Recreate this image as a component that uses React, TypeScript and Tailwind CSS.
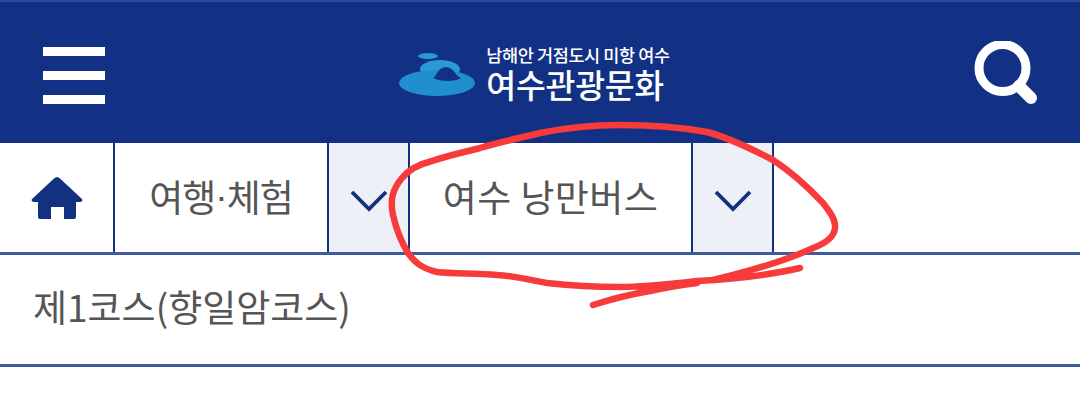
export default function App() {
  const font = { fontFamily: '"Noto Sans CJK KR", sans-serif' };
  const Chevron = () => (
    <svg width="38" height="24" viewBox="0 0 38 24" fill="none">
      <path d="M2 3 L19 20 L36 3" stroke="#12327f" strokeWidth="3.800" />
    </svg>
  );
  return (
    <div className="relative w-[1080px] h-[409px] bg-white overflow-hidden" style={font}>
      <header className="h-[143px] bg-[#123184] border-t-2 border-[#2d4a94] flex items-center justify-between pl-[43px] pr-[42px]">
        <div className="w-[62px] flex flex-col gap-[15px] mt-[6px]">
          <div className="h-[9px] bg-white" />
          <div className="h-[9px] bg-white" />
          <div className="h-[9px] bg-white" />
        </div>
        <div className="flex items-center gap-[10px] ml-[-10px] mt-[2px]">
          <svg width="77" height="46" viewBox="0 0 77 46">
            <ellipse cx="29" cy="5" rx="10" ry="3" fill="#2a9ad6" />
            <ellipse cx="41" cy="18" rx="20" ry="9" fill="#2a9ad6" />
            <ellipse cx="38" cy="32" rx="38" ry="13" fill="#1f8fd0" />
            <path d="M34 27 C38 25 39 16 47 16 C55 16 56 25 62 27 C56 31 42 31 34 27 Z" fill="#123184" />
          </svg>
          <div className="flex flex-col text-white leading-none">
            <span className="text-[17.5px] leading-[20px] font-medium whitespace-nowrap tracking-[-0.4px]">남해안 거점도시 미항 여수</span>
            <span className="text-[32.5px] leading-[38px] font-medium whitespace-nowrap tracking-[-0.3px]">여수관광문화</span>
          </div>
        </div>
        <svg width="64" height="64" viewBox="0 0 64 64" fill="none">
          <circle cx="28.500" cy="27" r="23.500" stroke="white" strokeWidth="9" />
          <path d="M45 45 L57 57" stroke="white" strokeWidth="12" strokeLinecap="round" />
        </svg>
      </header>
      <nav className="h-[112px] flex border-b-[3px] border-[#3f5a9e] text-[#555555] text-[37px]">
        <div className="w-[115px] border-r-2 border-[#12327f] flex items-center justify-center pt-[2px]">
          <svg width="52" height="43" viewBox="0 0 52 43" fill="#12327f">
            <path d="M26 0 C27 0 28 .5 29 1.500 L51 22 C52 23.500 51 25 49 25 L45 25 L45 40 Q45 42 43 42 L33 42 L33 30 L20 30 L20 42 L9 42 Q7 42 7 40 L7 25 L3 25 C1 25 0 23.500 1 22 L23 1.500 C24 .5 25 0 26 0 Z" />
          </svg>
        </div>
        <div className="w-[214px] border-r-2 border-[#12327f] flex items-center justify-center pb-[2px] whitespace-nowrap tracking-[-1px]">여행<span className="font-['Liberation_Sans']">·</span>체험</div>
        <div className="w-[81px] bg-[#edf0f6] border-r-2 border-[#12327f] flex items-center justify-center pt-[7px]"><Chevron /></div>
        <div className="w-[283px] border-r-2 border-[#12327f] flex items-center justify-center pb-[2px] whitespace-nowrap tracking-[0.4px]">여수 낭만버스</div>
        <div className="w-[81px] bg-[#edf0f6] border-r-2 border-[#12327f] flex items-center justify-center pt-[7px]"><Chevron /></div>
      </nav>
      <div className="h-[112px] border-b-[3px] border-[#3f5a9e] flex items-center pl-[33px] pb-[5px] text-[#555555] text-[37px] whitespace-nowrap">제1코스(향일암코스)</div>
      <svg className="absolute inset-0 pointer-events-none" width="1080" height="409" viewBox="0 0 1080 409" fill="none">
        <path
          d="M593 305 C615 298 632 294 650 291 C668 287 682 285 697 283 M800 268 C770 275 735 279 697 281 C670 284 645 287 620 287 C585 287 565 285 547 283 C525 279 515 276 497 275 C475 273 455 274 437 272 C420 268 414 261 408 253 C400 240 396 228 393 215 C390 200 392 190 402 178 C410 168 420 164 432 161 C450 155 465 152 480 148 C500 142 520 138 540 133 C570 127 595 125 620 125 C650 125 680 127 707 132 C730 138 752 149 773 160 C790 171 807 186 823 203 C830 212 836 220 835 228 C834 238 824 244 813 248 C790 259 750 271 713 280"
          stroke="#f73b3b"
          strokeWidth="6.500"
          strokeLinecap="round"
          strokeLinejoin="round"
        />
      </svg>
    </div>
  );
}
